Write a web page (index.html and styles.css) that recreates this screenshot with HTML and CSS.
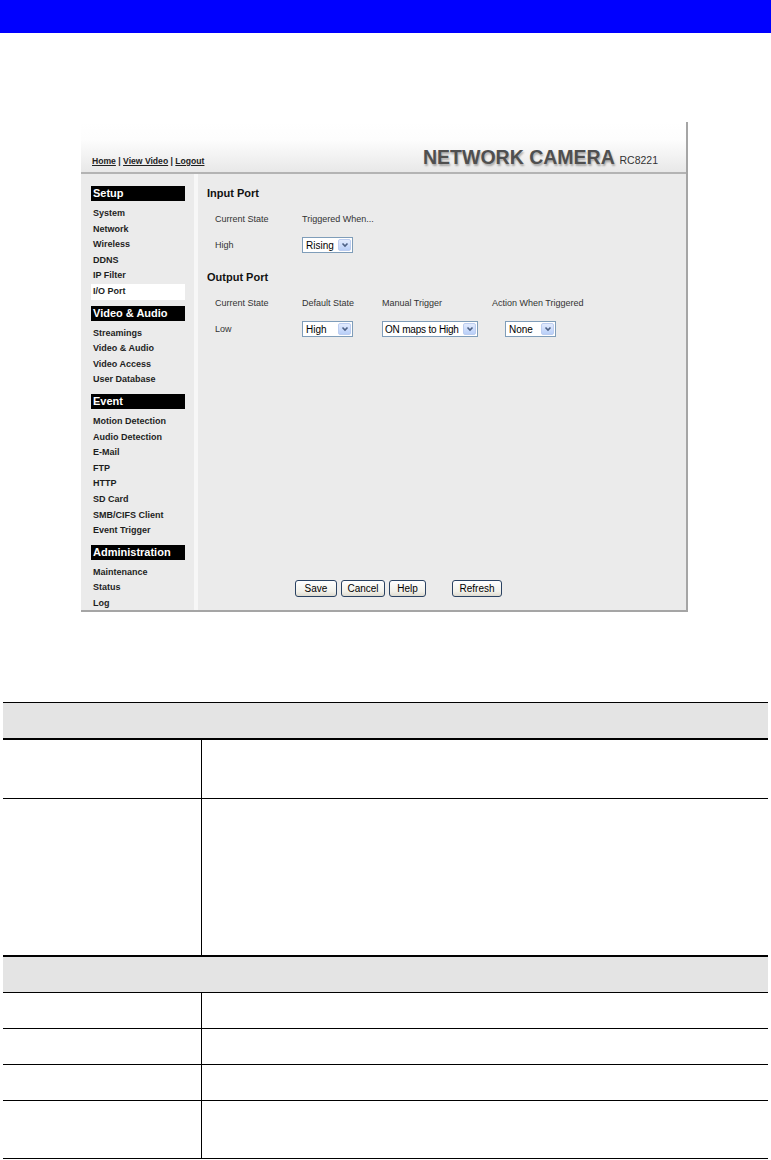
FILE: index.html
```html
<!DOCTYPE html>
<html lang="en">
<head>
    <meta charset="UTF-8">
    <title>I/O Port</title>
    <link rel="stylesheet" href="styles.css">
</head>
<body>
    <div class="topbar"></div>

    <div class="shot">
        <div class="shot-header">
            <div class="nav-links"><a href="#">Home</a> | <a href="#">View Video</a> | <a href="#">Logout</a></div>
            <div class="brand">NETWORK CAMERA <span class="model">RC8221</span></div>
        </div>

        <div class="shot-body">
            <aside class="menu">
                <div class="menu-head">Setup</div>
                <ul class="menu-list">
                    <li>System</li>
                    <li>Network</li>
                    <li>Wireless</li>
                    <li>DDNS</li>
                    <li>IP Filter</li>
                    <li class="active">I/O Port</li>
                </ul>
                <div class="menu-head">Video &amp; Audio</div>
                <ul class="menu-list">
                    <li>Streamings</li>
                    <li>Video &amp; Audio</li>
                    <li>Video Access</li>
                    <li>User Database</li>
                </ul>
                <div class="menu-head">Event</div>
                <ul class="menu-list">
                    <li>Motion Detection</li>
                    <li>Audio Detection</li>
                    <li>E-Mail</li>
                    <li>FTP</li>
                    <li>HTTP</li>
                    <li>SD Card</li>
                    <li>SMB/CIFS Client</li>
                    <li>Event Trigger</li>
                </ul>
                <div class="menu-head">Administration</div>
                <ul class="menu-list">
                    <li>Maintenance</li>
                    <li>Status</li>
                    <li>Log</li>
                </ul>
            </aside>

            <main class="panel">
                <h2 class="port-title">Input Port</h2>
                <div class="port-row labels">
                    <span>Current State</span>
                    <span>Triggered When...</span>
                </div>
                <div class="port-row fields">
                    <span>High</span>
                    <div class="dropdown w-small">
                        <span>Rising</span>
                        <span class="arrow"><svg width="8" height="6" viewBox="0 0 8 6"><polyline points="1.5,1.5 4,4 6.5,1.5" fill="none" stroke="#4d6185" stroke-width="1.6"/></svg></span>
                    </div>
                </div>

                <h2 class="port-title second">Output Port</h2>
                <div class="port-row labels">
                    <span>Current State</span>
                    <span>Default State</span>
                    <span>Manual Trigger</span>
                    <span>Action When Triggered</span>
                </div>
                <div class="port-row fields">
                    <span>Low</span>
                    <div class="dropdown w-small">
                        <span>High</span>
                        <span class="arrow"><svg width="8" height="6" viewBox="0 0 8 6"><polyline points="1.5,1.5 4,4 6.5,1.5" fill="none" stroke="#4d6185" stroke-width="1.6"/></svg></span>
                    </div>
                    <div class="dropdown w-wide">
                        <span>ON maps to High</span>
                        <span class="arrow"><svg width="8" height="6" viewBox="0 0 8 6"><polyline points="1.5,1.5 4,4 6.5,1.5" fill="none" stroke="#4d6185" stroke-width="1.6"/></svg></span>
                    </div>
                    <div class="dropdown w-small shifted">
                        <span>None</span>
                        <span class="arrow"><svg width="8" height="6" viewBox="0 0 8 6"><polyline points="1.5,1.5 4,4 6.5,1.5" fill="none" stroke="#4d6185" stroke-width="1.6"/></svg></span>
                    </div>
                </div>

                <div class="actions">
                    <button class="btn save">Save</button>
                    <button class="btn cancel">Cancel</button>
                    <button class="btn help">Help</button>
                    <button class="btn refresh">Refresh</button>
                </div>
            </main>
        </div>
    </div>

    <div class="spec">
        <div class="spec-head head-first"></div>
        <div class="spec-row row-58"><div></div><div></div></div>
        <div class="spec-row row-156 thick"><div></div><div></div></div>
        <div class="spec-head"></div>
        <div class="spec-row row-35"><div></div><div></div></div>
        <div class="spec-row row-35"><div></div><div></div></div>
        <div class="spec-row row-35"><div></div><div></div></div>
        <div class="spec-row row-57"><div></div><div></div></div>
    </div>
</body>
</html>
```

FILE: styles.css
```css
/* General */
body {
    margin: 0;
    padding: 0;
    background-color: #fff;
    font-family: 'Liberation Sans', Arial, sans-serif;
}

.topbar {
    height: 33px;
    background-color: #0000ff;
}

/* Screenshot frame */
.shot {
    width: 605px;
    margin: 89px 0 0 81px;
    border-right: 2px solid #a5a5a5;
    border-bottom: 2px solid #a5a5a5;
}

.shot-header {
    box-sizing: border-box;
    height: 52px;
    padding: 24px 28px 0 11px;
    display: flex;
    justify-content: space-between;
    align-items: baseline;
    background: linear-gradient(#ffffff 0%, #fdfdfd 35%, #e8e8e8 100%);
    border-bottom: 2px solid #b3b3b3;
}

.nav-links {
    font-size: 8.6px;
    font-weight: bold;
    color: #222;
}

.nav-links a {
    color: #222;
    text-decoration: underline;
}

.brand {
    font-size: 19.5px;
    line-height: 22px;
    font-weight: bold;
    color: #4f4f4f;
    text-shadow: 1px 2px 2px rgba(0, 0, 0, 0.3);
}

.brand .model {
    font-size: 10.5px;
    font-weight: normal;
    color: #333;
    text-shadow: none;
}

.shot-body {
    display: flex;
    height: 436px;
    overflow: hidden;
    background-color: #ebebeb;
}

/* Left menu */
.menu {
    width: 113px;
    box-sizing: border-box;
    padding: 12px 0 0 10px;
    flex-shrink: 0;
}

.menu-head {
    width: 94px;
    box-sizing: border-box;
    height: 15px;
    line-height: 15px;
    padding-left: 2px;
    background-color: #000;
    color: #fff;
    font-size: 11px;
    font-weight: bold;
}

.menu-list {
    list-style: none;
    margin: 0;
    padding: 5px 0 6px;
}

.menu-list li {
    width: 94px;
    box-sizing: border-box;
    height: 15.6px;
    line-height: 15.6px;
    padding-left: 2px;
    font-size: 9px;
    font-weight: bold;
    color: #1e1e1e;
}

.menu-list li.active {
    background-color: #fff;
}

/* Right panel */
.panel {
    flex: 1;
    display: flex;
    flex-direction: column;
    padding: 12px 0 13px 9px;
    border-left: 4px solid #f7f7f7;
}

.port-title {
    margin: 0;
    height: 23px;
    line-height: 14px;
    font-size: 11px;
    font-weight: bold;
    color: #111;
}

.port-title.second {
    margin-top: 10px;
}

.port-row {
    display: grid;
    grid-template-columns: 87px 80px 110px 1fr;
    align-items: center;
    padding-left: 8px;
    font-size: 9px;
    line-height: 11px;
    color: #333;
}

.port-row.labels {
    height: 21px;
}

.port-row.fields {
    height: 30px;
}

.dropdown {
    box-sizing: border-box;
    height: 16px;
    display: flex;
    align-items: center;
    justify-content: space-between;
    padding: 0 1px 0 3px;
    background-color: #fff;
    border: 1px solid #7f9db9;
    font-size: 10px;
    color: #000;
    white-space: nowrap;
}

.dropdown.w-small {
    width: 51px;
}

.dropdown.w-wide {
    width: 96px;
    padding-left: 2px;
    letter-spacing: -0.2px;
}

.dropdown.shifted {
    margin-left: 13px;
}

.dropdown .arrow {
    width: 13px;
    height: 12px;
    flex-shrink: 0;
    box-sizing: border-box;
    display: flex;
    align-items: center;
    justify-content: center;
    background: linear-gradient(#e2ebfe, #b9cff8);
    border: 1px solid #bccdf0;
    border-radius: 2px;
}

.actions {
    margin-top: auto;
    display: flex;
    gap: 4px;
    padding-left: 88px;
}

.btn {
    box-sizing: border-box;
    height: 17px;
    padding: 0;
    border: 1px solid #2a4262;
    border-radius: 3px;
    background: linear-gradient(#ffffff, #f1f0ea 70%, #dedbd0);
    font-family: 'Liberation Sans', Arial, sans-serif;
    font-size: 10px;
    color: #000;
}

.btn.save { width: 42px; }
.btn.cancel { width: 44px; }
.btn.help { width: 37px; }
.btn.refresh { width: 50px; margin-left: 22px; }

/* Parameter table */
.spec {
    width: 765px;
    margin: 90px 0 0 3px;
    border-top: 1px solid #000;
}

.spec-head {
    height: 35px;
    background-color: #e4e4e4;
    border-bottom: 1px solid #000;
}

.spec-head.head-first {
    border-bottom-width: 2px;
}

.spec-row {
    display: grid;
    grid-template-columns: 198px 1fr;
    border-bottom: 1px solid #000;
}

.spec-row.thick {
    border-bottom-width: 2px;
}

.spec-row > div + div {
    border-left: 1px solid #000;
}

.row-58 { height: 58px; }
.row-156 { height: 156px; }
.row-35 { height: 35px; }
.row-57 { height: 57px; }
```
